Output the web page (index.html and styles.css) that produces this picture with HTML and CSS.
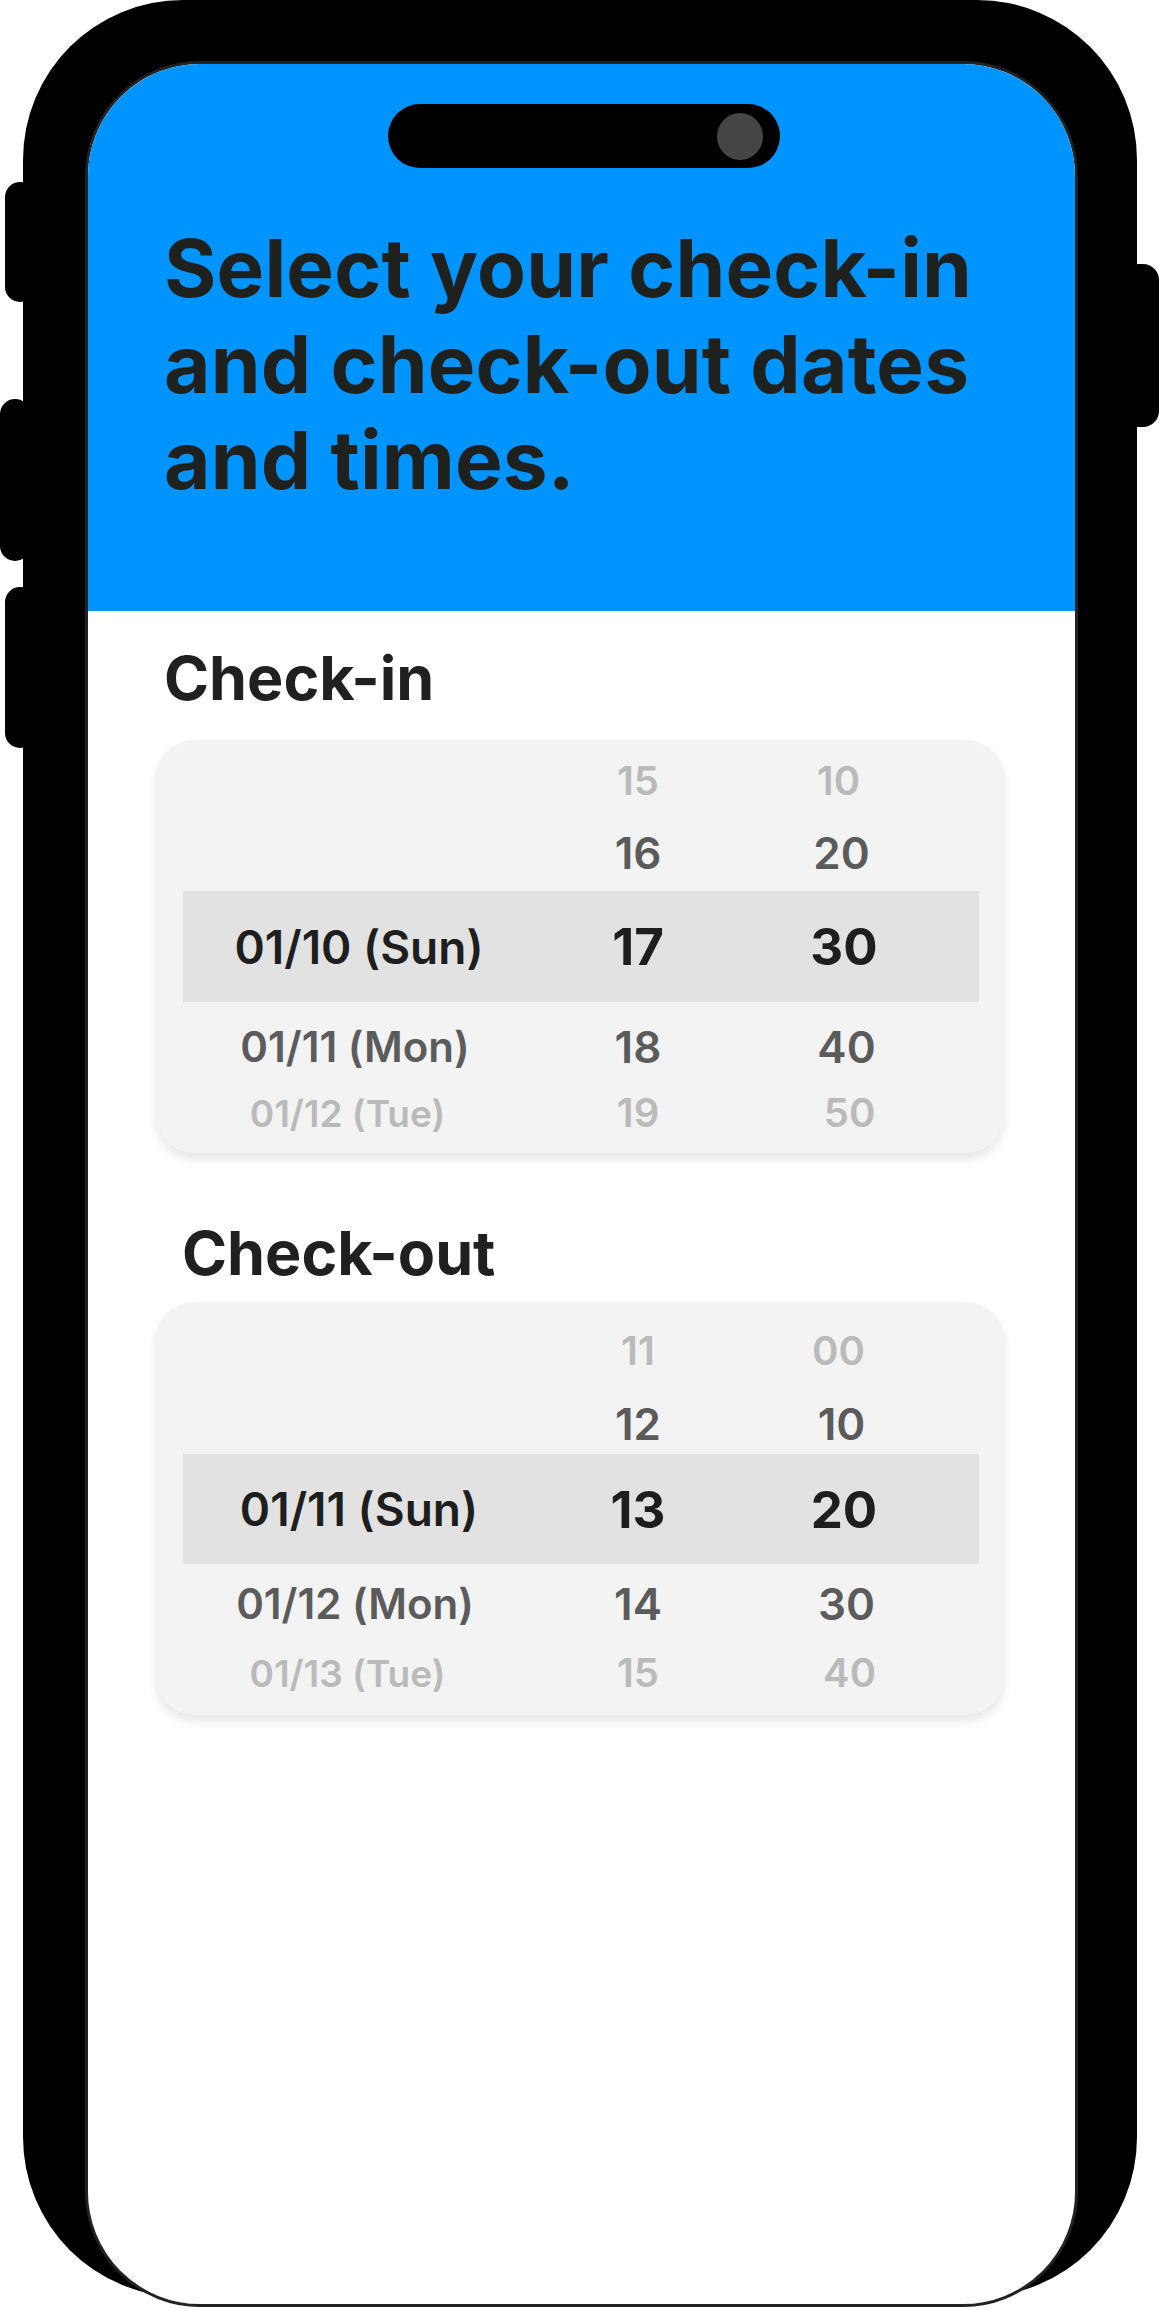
FILE: index.html
```html
<!DOCTYPE html>
<html lang="en">
<head>
<meta charset="utf-8">
<title>Select dates and times</title>
<link rel="stylesheet" href="styles.css">
</head>
<body>
<div class="phone">
  <span class="side-btn btn-l1"></span>
  <span class="side-btn btn-l2"></span>
  <span class="side-btn btn-l3"></span>
  <span class="side-btn btn-r1"></span>
  <div class="screen">
    <header class="hero">
      <div class="island"><span class="cam"></span></div>
      <h1 class="title">Select your check-in<br>and check-out dates<br>and times.</h1>
    </header>
    <main class="content">
      <h2 class="label">Check-in</h2>
      <div class="card">
        <div class="row r1"><span class="date"></span><span class="hour">15</span><span class="min">10</span></div>
        <div class="row r2"><span class="date"></span><span class="hour">16</span><span class="min">20</span></div>
        <div class="row r3"><span class="date">01/10 (Sun)</span><span class="hour">17</span><span class="min">30</span></div>
        <div class="row r4"><span class="date">01/11 (Mon)</span><span class="hour">18</span><span class="min">40</span></div>
        <div class="row r5"><span class="date">01/12 (Tue)</span><span class="hour">19</span><span class="min">50</span></div>
      </div>
      <h2 class="label label-out">Check-out</h2>
      <div class="card card-out">
        <div class="row r1"><span class="date"></span><span class="hour">11</span><span class="min">00</span></div>
        <div class="row r2"><span class="date"></span><span class="hour">12</span><span class="min">10</span></div>
        <div class="row r3"><span class="date">01/11 (Sun)</span><span class="hour">13</span><span class="min">20</span></div>
        <div class="row r4"><span class="date">01/12 (Mon)</span><span class="hour">14</span><span class="min">30</span></div>
        <div class="row r5"><span class="date">01/13 (Tue)</span><span class="hour">15</span><span class="min">40</span></div>
      </div>
    </main>
  </div>
</div>
</body>
</html>
```

FILE: styles.css
```css
* { box-sizing: border-box; }

html, body {
  margin: 0;
  padding: 0;
  background: #ffffff;
}

body {
  width: 1159px;
  height: 2308px;
  overflow: hidden;
  font-family: Inter, "Noto Sans", "Liberation Sans", sans-serif;
  color: #1f211f;
}

.phone {
  position: relative;
  margin-left: 23px;
  width: 1114px;
  height: 2297px;
  padding-top: 61px;
  padding-left: 62px;
  background: #000;
  border-radius: 160px;
}

.side-btn {
  position: absolute;
  background: #000;
  border-radius: 16px;
}
.btn-l1 { left: -18px; top: 182px; width: 30px; height: 120px; }
.btn-l2 { left: -23px; top: 399px; width: 30px; height: 162px; }
.btn-l3 { left: -18px; top: 587px; width: 30px; height: 161px; }
.btn-r1 { left: 1100px; top: 264px; width: 36px; height: 163px; }

.screen {
  width: 993px;
  height: 2246px;
  background: #ffffff;
  border: 3px solid #222222;
  border-radius: 115px;
  overflow: hidden;
}

.hero {
  height: 547px;
  background: #0094ff;
  padding-top: 40px;
  padding-left: 76px;
}

.island {
  margin-left: 224px;
  width: 392px;
  height: 64px;
  border-radius: 32px;
  background: #000;
  display: flex;
  justify-content: flex-end;
  align-items: center;
  padding-right: 17px;
}

.cam {
  width: 46px;
  height: 47px;
  border-radius: 50%;
  background: #454545;
}

.title {
  margin: 52px 0 0 0;
  font-size: 80px;
  line-height: 96px;
  font-weight: 700;
  letter-spacing: 0.2px;
  color: #1f211f;
}

.content {
  padding-left: 68px;
}

.label {
  margin: 31px 0 0 8px;
  font-size: 61px;
  line-height: 73px;
  font-weight: 700;
  color: #1f211f;
}

.label-out {
  margin: 64px 0 0 26px;
}

.card {
  width: 848px;
  height: 413px;
  margin-top: 25px;
  padding: 0 25px 0 27px;
  background: #f3f3f3;
  border-radius: 38px;
  box-shadow: 0 6px 10px rgba(0, 0, 0, 0.10);
}

.card-out {
  margin-top: 12px;
}

.row {
  display: grid;
  grid-template-columns: 352px 206px 206px;
  align-items: center;
  text-align: center;
  line-height: 1;
  font-weight: 600;
}

.r1 { height: 81px; font-size: 40px; color: #bababa; }
.r2 { height: 63px; font-size: 44px; color: #5b5b5b; }
.r3 { height: 111px; margin-top: 7px; background: #e2e2e2; font-size: 51px; color: #1e1e1e; font-weight: 700; }
.r4 { height: 89px; font-size: 44px; color: #5b5b5b; }
.r5 { height: 44px; font-size: 40px; color: #bababa; }

.r3 .date { font-size: 46px; font-weight: 600; }
.r4 .date { font-size: 42px; padding-right: 8px; }
.r5 .date { font-size: 37px; padding-right: 23px; }

.r1 .min { padding-right: 11px; }
.r2 .min { padding-right: 5px; }
.r4 .min { padding-left: 5px; }
.r5 .min { padding-left: 11px; }

.card-out .r1 { height: 98px; }
.card-out .r2 { height: 47px; }
.card-out .r3 { height: 110px; }
.card-out .r4 { height: 80px; }
.card-out .r5 { height: 58px; }
```
